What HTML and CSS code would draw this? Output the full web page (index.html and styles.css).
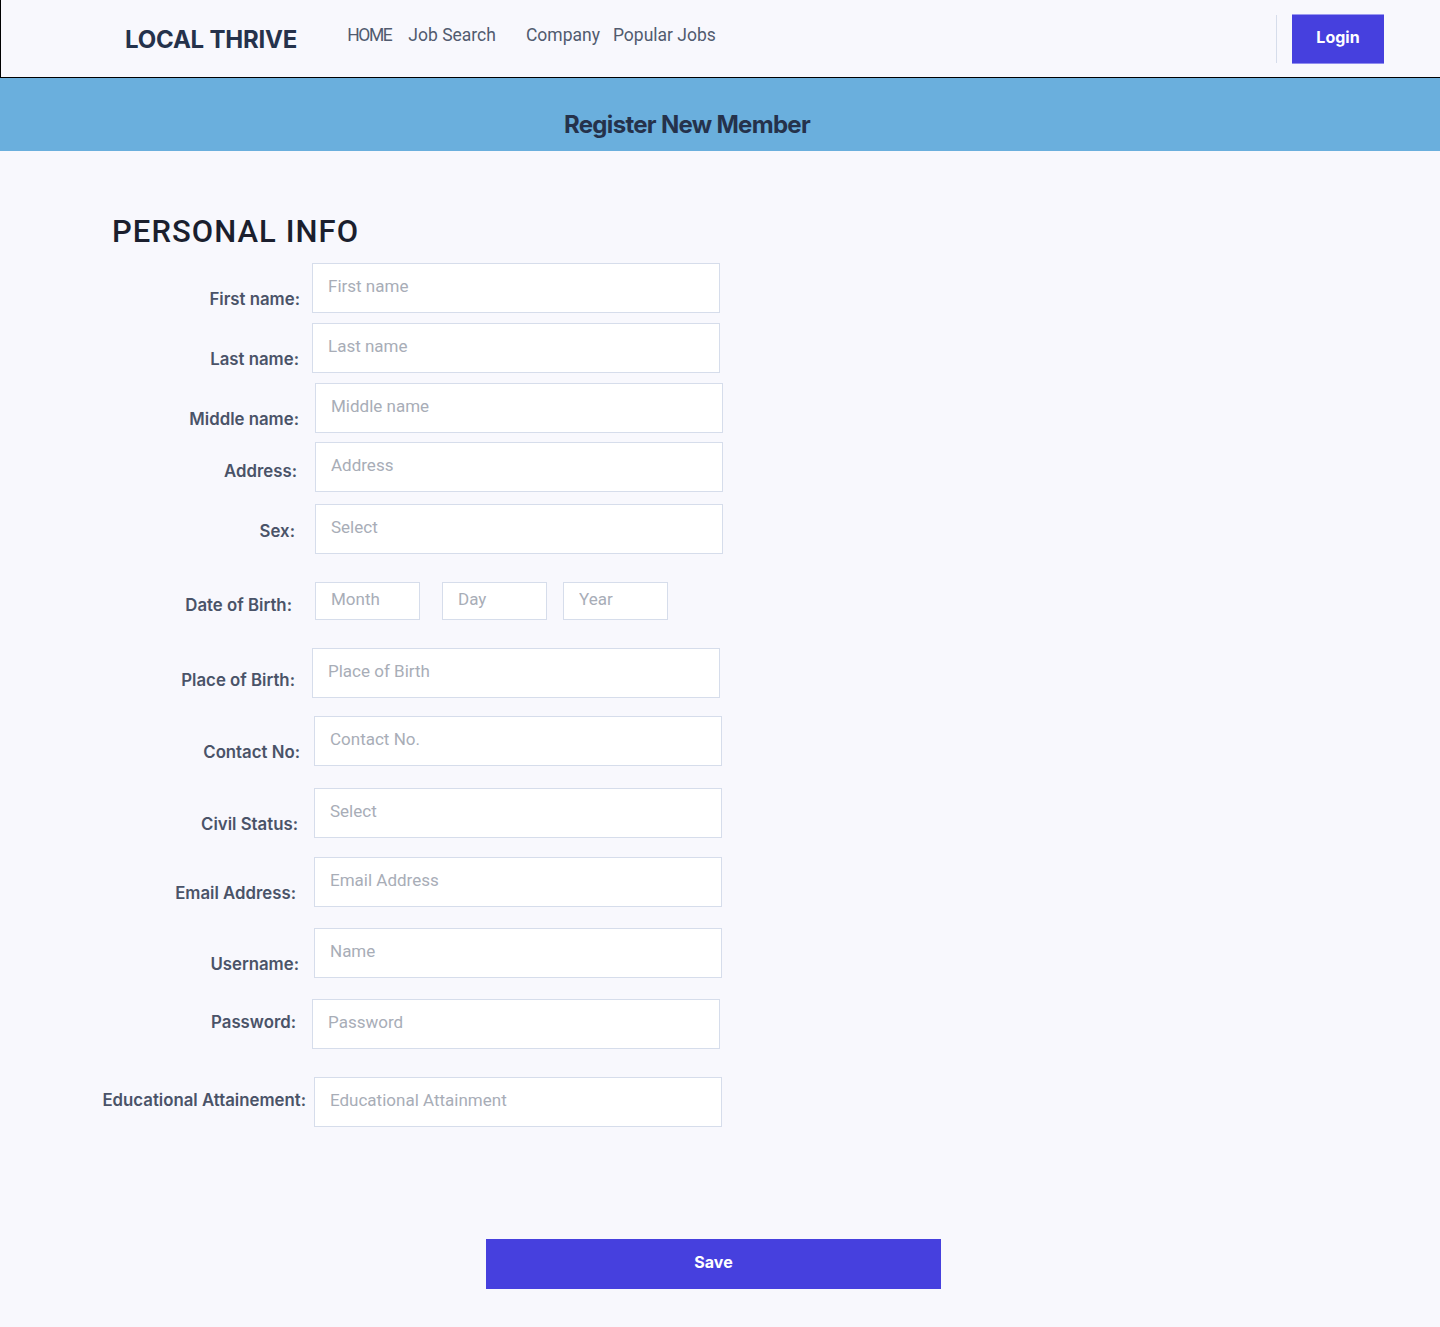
FILE: index.html
```html
<!DOCTYPE html>
<html lang="en">
<head>
<meta charset="utf-8">
<title>Register New Member - Local Thrive</title>
<link rel="stylesheet" href="styles.css">
</head>
<body>
<header class="topbar">
  <div class="logo">LOCAL THRIVE</div>
  <nav class="nav">
    <a href="#" class="nav-link nav-link--home">HOME</a>
    <a href="#" class="nav-link nav-link--search">Job Search</a>
    <a href="#" class="nav-link nav-link--company">Company</a>
    <a href="#" class="nav-link">Popular Jobs</a>
  </nav>
  <div class="spacer"></div>
  <div class="divider"></div>
  <button class="login-btn" type="button">Login</button>
</header>

<section class="banner">
  <h1 class="banner-title">Register New Member</h1>
</section>

<main class="form-wrap">
  <h2 class="section-title">PERSONAL INFO</h2>
  <form class="form">
    <div class="row row--first">
      <label class="label lbl-a">First name:</label>
      <input class="field" type="text" placeholder="First name">
    </div>
    <div class="row mt-10">
      <label class="label lbl-a pr-13">Last name:</label>
      <input class="field" type="text" placeholder="Last name">
    </div>
    <div class="row mt-10">
      <label class="label lbl-a pr-13">Middle name:</label>
      <input class="field s3" type="text" placeholder="Middle name">
    </div>
    <div class="row mt-9">
      <label class="label lbl-b pr-15">Address:</label>
      <input class="field s3" type="text" placeholder="Address">
    </div>
    <div class="row mt-12">
      <label class="label lbl-c pr-17">Sex:</label>
      <input class="field s3" type="text" placeholder="Select">
    </div>
    <div class="row mt-28">
      <label class="label lbl-d pr-20">Date of Birth:</label>
      <div class="dob s3">
        <input class="field field--small" type="text" placeholder="Month">
        <input class="field field--small day" type="text" placeholder="Day">
        <input class="field field--small year" type="text" placeholder="Year">
      </div>
    </div>
    <div class="row mt-28">
      <label class="label lbl-e pr-17">Place of Birth:</label>
      <input class="field" type="text" placeholder="Place of Birth">
    </div>
    <div class="row mt-18">
      <label class="label lbl-a">Contact No:</label>
      <input class="field s2" type="text" placeholder="Contact No.">
    </div>
    <div class="row mt-22">
      <label class="label lbl-a pr-14">Civil Status:</label>
      <input class="field s2" type="text" placeholder="Select">
    </div>
    <div class="row mt-19">
      <label class="label lbl-a pr-16">Email Address:</label>
      <input class="field s2" type="text" placeholder="Email Address">
    </div>
    <div class="row mt-21">
      <label class="label lbl-a pr-13">Username:</label>
      <input class="field s2" type="text" placeholder="Name">
    </div>
    <div class="row mt-21">
      <label class="label lbl-d pr-16">Password:</label>
      <input class="field" type="password" placeholder="Password">
    </div>
    <div class="row mt-28">
      <label class="label lbl-d label--tight">Educational Attainement:</label>
      <input class="field s2" type="text" placeholder="Educational Attainment">
    </div>
    <button class="save-btn" type="button">Save</button>
  </form>
</main>
</body>
</html>
```

FILE: styles.css
```css
* { box-sizing: border-box; }

html, body {
  margin: 0;
  padding: 0;
  background: #f8f8fd;
  font-family: "Inter", "Liberation Sans", sans-serif;
}

/* Header */
.topbar {
  display: flex;
  align-items: center;
  height: 78px;
  border-left: 1px solid #000;
  border-bottom: 1px solid #000;
  padding-left: 124px;
  padding-right: 56px;
  background: #f8f8fd;
}

.logo {
  font-family: "Inter", sans-serif;
  font-weight: 700;
  font-size: 24px;
  letter-spacing: -0.2px;
  color: #25324b;
  padding-top: 2px;
  white-space: nowrap;
}

.nav {
  display: flex;
  margin-left: 50px;
  padding-bottom: 8px;
}

.nav-link {
  font-family: "Roboto", sans-serif;
  font-size: 17.5px;
  color: #515b6f;
  text-decoration: none;
  white-space: nowrap;
}

.nav-link--home { letter-spacing: -1.4px; margin-right: 17px; }
.nav-link--search { margin-right: 30px; }
.nav-link--company { margin-right: 13px; }

.spacer { flex: 1; }

.divider {
  width: 1px;
  height: 48px;
  background: #d6ddeb;
  margin-right: 15px;
}

.login-btn {
  width: 92px;
  height: 50px;
  background: #4640de;
  border: none;
  border-top: 1px solid #9c9af0;
  border-bottom: 1px solid #8f8cef;
  color: #fff;
  font-family: "Inter", sans-serif;
  font-weight: 700;
  font-size: 16px;
  padding: 0 0 3px 0;
  cursor: pointer;
}

/* Banner */
.banner {
  background: #6aafdd;
  height: 73px;
  text-align: center;
  padding-top: 34px;
  padding-right: 66px;
}

.banner-title {
  margin: 0;
  font-family: "Inter", sans-serif;
  font-weight: 700;
  font-size: 24px;
  line-height: 26px;
  letter-spacing: -0.7px;
  color: #25324b;
}

/* Form */
.form-wrap {
  padding: 62px 0 38px 100px;
}

.section-title {
  margin: 0 0 0 12px;
  font-family: "Roboto", sans-serif;
  font-weight: 500;
  font-size: 31px;
  line-height: 36px;
  letter-spacing: 1.05px;
  color: #1b1f2e;
  padding-top: 1px;
}

.form { display: flex; flex-direction: column; align-items: flex-start; }

.row {
  display: flex;
  align-items: flex-start;
}

.row--first { margin-top: 13px; }
.mt-9 { margin-top: 9px; }
.mt-10 { margin-top: 10px; }
.mt-12 { margin-top: 12px; }
.mt-18 { margin-top: 18px; }
.mt-19 { margin-top: 19px; }
.mt-21 { margin-top: 21px; }
.mt-22 { margin-top: 22px; }
.mt-28 { margin-top: 28px; }

.label {
  width: 212px;
  display: flex;
  justify-content: flex-end;
  padding-right: 12px;
  font-family: "Inter", sans-serif;
  font-weight: 600;
  font-size: 16.8px;
  line-height: 20px;
  color: #4a5368;
  white-space: nowrap;
}

.label--tight { padding-right: 6px; }
.pr-13 { padding-right: 13px; }
.pr-14 { padding-right: 14px; }
.pr-15 { padding-right: 15px; }
.pr-16 { padding-right: 16px; }
.pr-17 { padding-right: 17px; }
.pr-20 { padding-right: 20px; }

.lbl-a { padding-top: 26px; }
.lbl-b { padding-top: 19px; }
.lbl-c { padding-top: 17px; }
.lbl-d { padding-top: 13px; }
.lbl-e { padding-top: 22px; }

.field {
  width: 408px;
  height: 50px;
  background: #fff;
  border: 1px solid #d6ddeb;
  border-radius: 0;
  padding: 0 15px 4px 15px;
  font-family: "Roboto", sans-serif;
  font-size: 17px;
  color: #25324b;
  outline: none;
}

.field::placeholder { color: #a8adb7; }

.s2 { margin-left: 2px; }
.s3 { margin-left: 3px; }

.dob { display: flex; }

.field--small {
  width: 105px;
  height: 38px;
  padding-bottom: 4px;
}

.day { margin-left: 22px; }
.year { margin-left: 16px; }

.save-btn {
  margin-top: 112px;
  margin-left: 386px;
  width: 455px;
  height: 50px;
  background: #4640de;
  border: none;
  color: #fff;
  font-family: "Inter", sans-serif;
  font-weight: 700;
  font-size: 16px;
  padding: 0 0 4px 0;
  cursor: pointer;
}
```
